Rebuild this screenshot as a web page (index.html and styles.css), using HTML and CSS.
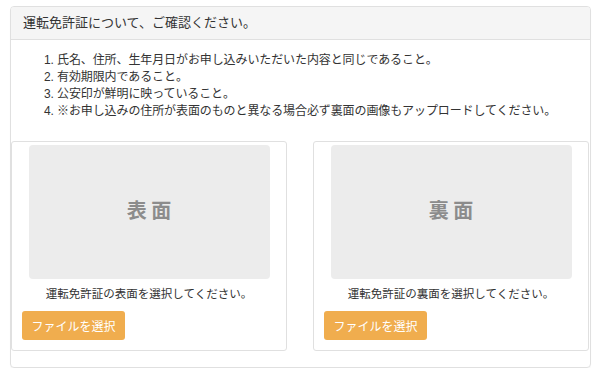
FILE: index.html
```html
<!DOCTYPE html>
<html lang="ja">
<head>
<meta charset="utf-8">
<link rel="stylesheet" href="styles.css">
</head>
<body>
<div class="panel">
  <div class="panel-heading">運転免許証について、ご確認ください。</div>
  <div class="panel-body">
    <ol class="rules">
      <li>氏名、住所、生年月日がお申し込みいただいた内容と同じであること。</li>
      <li>有効期限内であること。</li>
      <li>公安印が鮮明に映っていること。</li>
      <li>※お申し込みの住所が表面のものと異なる場合必ず裏面の画像もアップロードしてください。</li>
    </ol>
    <div class="cards">
      <div class="card">
        <div class="preview">表 面</div>
        <p class="caption">運転免許証の表面を選択してください。</p>
        <button class="btn">ファイルを選択</button>
      </div>
      <div class="card">
        <div class="preview">裏 面</div>
        <p class="caption">運転免許証の裏面を選択してください。</p>
        <button class="btn">ファイルを選択</button>
      </div>
    </div>
  </div>
</div>
</body>
</html>
```
FILE: styles.css
```css
* { box-sizing: border-box; }
body {
  margin: 0;
  font-family: "Liberation Sans", "Noto Sans CJK JP", sans-serif;
  font-size: 12px;
  line-height: 17px;
  color: #333;
  background: #fff;
}
.panel {
  margin: 6px 0 0 10px;
  width: 581px;
  height: 362px;
  border: 1px solid #e0e0e0;
  border-radius: 4px;
  box-shadow: 0 1px 1px rgba(0,0,0,0.04);
}
.panel-heading {
  height: 33px;
  padding: 7px 12px 0;
  background: #f5f5f5;
  border-bottom: 1px solid #e0e0e0;
  border-radius: 3px 3px 0 0;
  font-size: 13px;
  line-height: 18px;
}
.panel-body {
  padding: 12px 0 0;
}
.rules {
  margin: 0 0 21px;
  padding-left: 46px;
}
.rules li {
  line-height: 17px;
  letter-spacing: -0.1px;
}
.cards {
  display: grid;
  grid-template-columns: 1fr 1fr;
  column-gap: 26px;
  padding-right: 1px;
}
.card {
  border: 1px solid #e0e0e0;
  border-radius: 3px;
  padding: 3px 10px 9px;
  height: 210px;
}
.preview {
  width: 241px;
  height: 134px;
  margin: 0 auto;
  padding-bottom: 5px;
  background: #ececec;
  border-radius: 4px;
  display: flex;
  align-items: center;
  justify-content: center;
  font-size: 20px;
  font-weight: bold;
  color: #8c8c8c;
  font-family: "Noto Sans CJK JP", sans-serif;
}
.caption {
  margin: 7px 0 8px;
  text-align: center;
  font-size: 11.5px;
  line-height: 17px;
}
.btn {
  display: block;
  width: 103px;
  height: 29px;
  padding: 0;
  border: none;
  border-radius: 3px;
  background: #f0ad4e;
  color: #fff;
  font-family: "Liberation Sans", "Noto Sans CJK JP", sans-serif;
  font-size: 12px;
  text-align: center;
}
```
